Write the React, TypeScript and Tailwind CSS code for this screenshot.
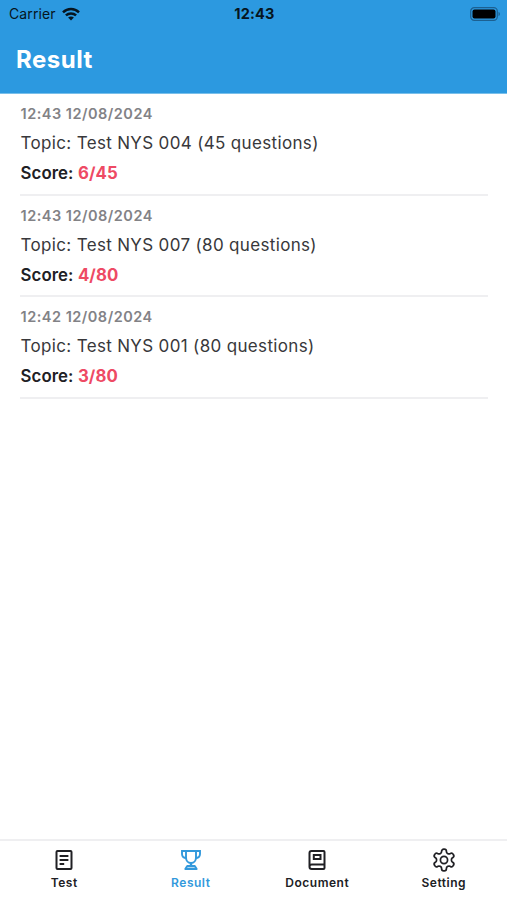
import type { ReactNode } from 'react';

type ResultItem = {
  time: string;
  topic: string;
  score: string;
};

const results: ResultItem[] = [
  { time: '12:43 12/08/2024', topic: 'Test NYS 004 (45 questions)', score: '6/45' },
  { time: '12:43 12/08/2024', topic: 'Test NYS 007 (80 questions)', score: '4/80' },
  { time: '12:42 12/08/2024', topic: 'Test NYS 001 (80 questions)', score: '3/80' },
];

function WifiIcon() {
  return (
    <svg width="18" height="14" viewBox="0 0 18 14" fill="none" stroke="#061520" strokeWidth="2.5">
      <path d="M1 5.3C5.6.9 12.4.9 17 5.3" />
      <path d="M3.9 8.4C6.8 5.7 11.2 5.7 14.1 8.4" />
      <path d="M9 13.6 6.1 10.6c1.6-1.5 4.2-1.5 5.8 0Z" fill="#061520" stroke="none" />
    </svg>
  );
}

function BatteryIcon() {
  return (
    <svg width="30" height="14" viewBox="0 0 30 14" fill="none">
      <rect x="0.7" y="0.7" width="26.6" height="12.6" rx="3.6" stroke="#1c6091" strokeWidth="1.2" />
      <rect x="2.5" y="2.5" width="23" height="9" rx="2" fill="#000" />
      <path d="M28.5 5v4c.9-.3 1.4-1.1 1.4-2s-.5-1.7-1.4-2Z" fill="#1c6091" />
    </svg>
  );
}

function TestIcon() {
  return (
    <svg width="24" height="24" viewBox="0 0 24 24" fill="none" stroke="currentColor" strokeWidth="2">
      <rect x="4.5" y="3" width="15" height="18" rx="1" />
      <path d="M7.6 8h8.8M7.6 12h8.8M7.6 16h4.6" />
    </svg>
  );
}

function TrophyIcon() {
  return (
    <svg width="24" height="24" viewBox="0 0 24 24" fill="none" stroke="currentColor" strokeWidth="1.9">
      <path d="M7 3h10v6.5c0 3.2-2 5.5-5 5.5s-5-2.3-5-5.5V3Z" />
      <path d="M7 3H3v3c0 2.5 1.6 4 4.3 4M17 3h4v3c0 2.5-1.6 4-4.3 4" />
      <path d="M12 15v3" strokeWidth="2.4" />
      <path d="M6.3 21 8.2 18h7.6l1.9 3Z" fill="currentColor" fillOpacity="0.4" strokeLinejoin="round" />
    </svg>
  );
}

function DocumentIcon() {
  return (
    <svg width="24" height="24" viewBox="0 0 24 24" fill="none" stroke="currentColor" strokeWidth="2">
      <path d="M4.5 18.7V5c0-1.2.8-2 2-2h12c.6 0 1 .4 1 1v16c0 .6-.4 1-1 1H6.800c-1.300 0-2.300-1-2.300-2.300s1-2.200 2.300-2.200h12.700" />
      <rect x="8.800" y="7" width="6.700" height="4" />
    </svg>
  );
}

function SettingIcon() {
  return (
    <svg width="26" height="26" viewBox="0 0 24 24" fill="none" stroke="currentColor" strokeWidth="1.6">
      <path d="M12.22 2h-.44a2 2 0 0 0-2 2v.18a2 2 0 0 1-1 1.73l-.43.25a2 2 0 0 1-2 0l-.15-.08a2 2 0 0 0-2.73.73l-.22.38a2 2 0 0 0 .73 2.73l.15.1a2 2 0 0 1 1 1.72v.51a2 2 0 0 1-1 1.74l-.15.09a2 2 0 0 0-.73 2.73l.22.38a2 2 0 0 0 2.73.73l.15-.08a2 2 0 0 1 2 0l.43.25a2 2 0 0 1 1 1.73V20a2 2 0 0 0 2 2h.44a2 2 0 0 0 2-2v-.18a2 2 0 0 1 1-1.73l.43-.25a2 2 0 0 1 2 0l.15.08a2 2 0 0 0 2.73-.73l.22-.39a2 2 0 0 0-.73-2.73l-.15-.08a2 2 0 0 1-1-1.74v-.5a2 2 0 0 1 1-1.74l.15-.09a2 2 0 0 0 .73-2.73l-.22-.38a2 2 0 0 0-2.73-.73l-.15.08a2 2 0 0 1-2 0l-.43-.25a2 2 0 0 1-1-1.73V4a2 2 0 0 0-2-2Z" />
      <circle cx="12" cy="12" r="3.3" />
    </svg>
  );
}

function Tab({ label, active, children }: { label: string; active?: boolean; children: ReactNode }) {
  return (
    <button
      className={`flex flex-1 flex-col items-center pt-[7px] ${active ? 'text-[#3299dc]' : 'text-[#202024]'}`}
    >
      <span className="flex h-6 items-center">{children}</span>
      <span className="mt-[3px] text-[12px] leading-4 font-semibold tracking-[0.5px]">{label}</span>
    </button>
  );
}

export default function App() {
  return (
    <div className="flex h-[900px] w-full flex-col bg-white font-['Inter',sans-serif]">
      {/* Header */}
      <header className="h-[94px] border-b border-[#79bfea] bg-[#2c99e0]">
        <div className="grid h-[27px] grid-cols-3 items-center pr-[7px] pl-[9px] text-[#061520]">
          <div className="flex items-center gap-[6px]">
            <span className="text-[14px] tracking-[0.1px]">Carrier</span>
            <WifiIcon />
          </div>
          <span className="text-center text-[14.5px] font-bold tracking-[0.2px]">12:43</span>
          <div className="flex justify-end">
            <BatteryIcon />
          </div>
        </div>
        <h1 className="mt-[17px] pl-4 text-[24px] leading-8 font-bold tracking-[0.5px] text-white">Result</h1>
      </header>

      {/* Results */}
      <main className="flex-1 pr-[19px] pl-5">
        {results.map((item) => (
          <div key={item.topic} className="h-[101.5px] border-b-2 border-[#efeff1] pt-[10px] pl-[0.5px]">
            <p className="text-[14.5px] leading-5 font-semibold tracking-[0.5px] text-[#828286]">{item.time}</p>
            <p className="mt-[5px] text-[17px] leading-7 tracking-[0.34px] text-[#38383b]">Topic: {item.topic}</p>
            <p className="mt-[2px] text-[16.8px] leading-7 font-semibold tracking-[0.1px] text-[#202024]">
              Score: <span className="font-bold text-[#ee4a64]">{item.score}</span>
            </p>
          </div>
        ))}
      </main>

      {/* Bottom tabs */}
      <nav className="flex h-[61px] border-t-2 border-[#efeff1] pl-px">
        <Tab label="Test">
          <TestIcon />
        </Tab>
        <Tab label="Result" active>
          <TrophyIcon />
        </Tab>
        <Tab label="Document">
          <DocumentIcon />
        </Tab>
        <Tab label="Setting">
          <SettingIcon />
        </Tab>
      </nav>
    </div>
  );
}
